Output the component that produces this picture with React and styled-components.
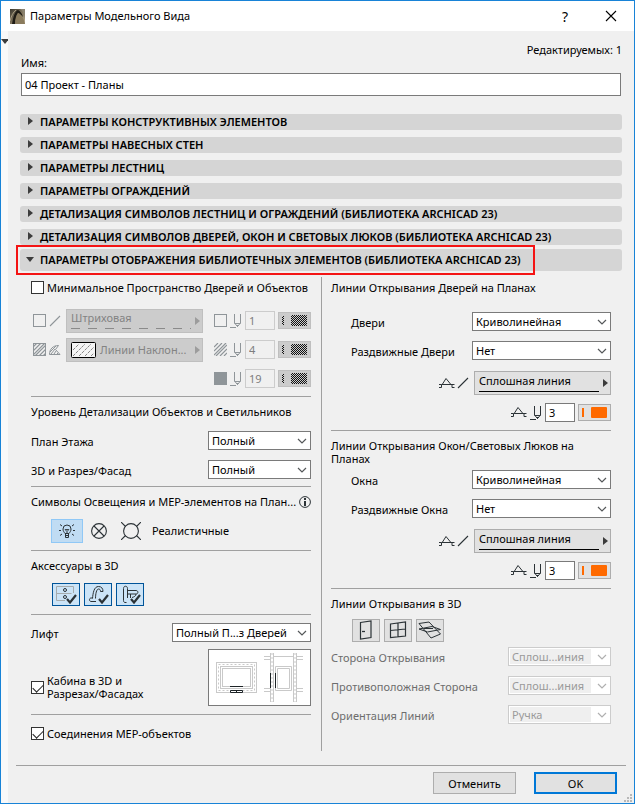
import React, { useState } from "react";
import styled, { createGlobalStyle } from "styled-components";

const GlobalStyle = createGlobalStyle`
  * {
    box-sizing: border-box;
  }

  body {
    margin: 0;
    background: #f0f0f0;
    color: #000000;
    font: 11px/13px "Noto Sans", "Open Sans", sans-serif;
  }

  button, input, select {
    margin: 0;
    color: inherit;
    font: inherit;
  }

  svg {
    display: block;
    flex: none;
  }
`;

const panels = [
  "ПАРАМЕТРЫ КОНСТРУКТИВНЫХ ЭЛЕМЕНТОВ",
  "ПАРАМЕТРЫ НАВЕСНЫХ СТЕН",
  "ПАРАМЕТРЫ ЛЕСТНИЦ",
  "ПАРАМЕТРЫ ОГРАЖДЕНИЙ",
  "ДЕТАЛИЗАЦИЯ СИМВОЛОВ ЛЕСТНИЦ И ОГРАЖДЕНИЙ (БИБЛИОТЕКА ARCHICAD 23)",
  "ДЕТАЛИЗАЦИЯ СИМВОЛОВ ДВЕРЕЙ, ОКОН И СВЕТОВЫХ ЛЮКОВ (БИБЛИОТЕКА ARCHICAD 23)",
];

/* ---------- icons ---------- */

const AppLogo = () => (
  <svg width="15" height="15" viewBox="0 0 15 15" aria-hidden="true">
    <defs>
      <linearGradient id="logoBg" x1="0" y1="0" x2="1" y2="1">
        <stop offset="0" stopColor="#3a372d" />
        <stop offset="0.5" stopColor="#7d725c" />
        <stop offset="1" stopColor="#c0b294" />
      </linearGradient>
    </defs>
    <rect width="15" height="15" fill="url(#logoBg)" />
    <path d="M10 0c3 2 5 6 5 11V0z" fill="#8b8371" />
    <path d="M2 15C3 8 5 2 8 1c2 1 4 3 5 7-2-2-4-4-5-4-2 2-2 6-3 11z" fill="#1f1c15" />
    <path d="M0 12C1 8 3 3 6 1" stroke="#a99d82" fill="none" />
    <path d="M5 15c0-5 1-8 3-11 3 1 6 6 7 11z" fill="#8a7b5d" />
  </svg>
);

const CloseIcon = () => (
  <svg width="12" height="12" viewBox="0 0 12 12" aria-hidden="true">
    <path d="M1 1l10 10M11 1L1 11" stroke="#000" strokeWidth="1.1" />
  </svg>
);

const SquareIcon = () => (
  <svg width="13" height="13" viewBox="0 0 13 13" aria-hidden="true">
    <rect x="0.5" y="0.5" width="12" height="12" fill="none" stroke="#8f9599" />
  </svg>
);

const HatchIcon = ({ framed }) => (
  <svg width="13" height="13" viewBox="0 0 13 13" aria-hidden="true">
    <path
      d="M0 4l4-4M0 8l8-8M0 12L12 0M2 13L13 2M6 13l7-7M10 13l3-3"
      stroke="#8f9599"
      strokeWidth="1.2"
    />
    {framed && <rect x="0.5" y="0.5" width="12" height="12" fill="none" stroke="#8f9599" />}
  </svg>
);

const SolidIcon = () => (
  <svg width="13" height="13" viewBox="0 0 13 13" aria-hidden="true">
    <rect width="13" height="13" fill="#8f9599" />
  </svg>
);

const FanIcon = () => (
  <svg width="12" height="12" viewBox="0 0 12 12" aria-hidden="true">
    <g stroke="#8f9599" fill="none">
      <path d="M0.500 10.500C0.500 5 4 1.500 9.500 1.500L6.500 5.500 11 10.500z" />
      <path d="M1 8l6-6M2 10l4-5M5 10l2-3M8 10l1-1" />
    </g>
  </svg>
);

const LineIcon = ({ color = "#2b3236" }) => (
  <svg width="12" height="12" viewBox="0 0 12 12" aria-hidden="true">
    <path d="M1 11L11 1" stroke={color} strokeWidth="1.1" />
  </svg>
);

const PenIcon = ({ color = "#2b3236" }) => (
  <svg width="12" height="14" viewBox="0 0 12 14" aria-hidden="true">
    <g stroke={color} fill="none">
      <path d="M4.500 0v9l3 3.500 3-3.500V0M4.500 9.500h6M0 13.500h6" />
      <path d="M6.500 11.500h2l-1 1z" fill={color} />
    </g>
  </svg>
);

const OpeningIcon = () => (
  <svg width="16" height="13" viewBox="0 0 16 13" aria-hidden="true">
    <g stroke="#2b3236" fill="none">
      <path d="M0 7.500h2.500v3H0M15.500 7.500H13v3h2.500" />
      <path d="M2.500 7.500h10.500M3.500 7L7 1.500 11.500 7" />
    </g>
  </svg>
);

const Chevron = ({ color = "#55585a" }) => (
  <svg width="10" height="6" viewBox="0 0 10 6" aria-hidden="true">
    <path d="M1 1l4 4 4-4" fill="none" stroke={color} strokeWidth="1.2" />
  </svg>
);

const Triangle = ({ down, color = "#3c3c3c" }) =>
  down ? (
    <svg width="8" height="5" viewBox="0 0 8 5" aria-hidden="true">
      <path d="M0 0h8L4 5z" fill={color} />
    </svg>
  ) : (
    <svg width="5" height="8" viewBox="0 0 5 8" aria-hidden="true">
      <path d="M0 0v8l5-4z" fill={color} />
    </svg>
  );

const InfoIcon = () => (
  <svg width="12" height="12" viewBox="0 0 12 12" aria-hidden="true">
    <circle cx="6" cy="6" r="5.400" fill="none" stroke="#2b3236" />
    <path d="M5 2h2v2H5zM5 5h2v5H5z" fill="#2b3236" />
  </svg>
);

const BulbIcon = () => (
  <svg width="16" height="16" viewBox="0 0 16 16" aria-hidden="true">
    <g stroke="#2b3236" fill="none">
      <path d="M6 10.500C5 9 4 8 4 6a4 4 0 018 0c0 2-1 3-2 4.500z" />
      <path d="M6 6l1 1.500L8 6l1 1.500L10 6M8 8v2.500M6.500 12.500h3M6.500 14.500h3M6.500 10.500v4M9.500 10.500v4" />
      <path d="M0 7.500h2M14 7.500h2M1 1.500l2 1.500M15 1.500L13 3M1 12.500l2-1.500M15 12.500L13 11" />
    </g>
  </svg>
);

const CrossLampIcon = () => (
  <svg width="16" height="16" viewBox="0 0 16 16" aria-hidden="true">
    <circle cx="8" cy="8" r="7.400" fill="none" stroke="#2b3236" strokeWidth="1.100" />
    <path d="M3 3l10 10M13 3L3 13" stroke="#2b3236" strokeWidth="1.100" />
  </svg>
);

const RayLampIcon = () => (
  <svg width="20" height="18" viewBox="0 0 20 18" aria-hidden="true">
    <circle cx="10" cy="9" r="7.400" fill="none" stroke="#2b3236" strokeWidth="1.100" />
    <path d="M0 0l4.500 4.500M20 0l-4.500 4.500M0 18l4.500-4.500M20 18l-4.500-4.500" stroke="#2b3236" strokeWidth="1.100" />
  </svg>
);

const Tick = () => <path d="M12 14l3 3.500 6-7.500" fill="none" stroke="#2b3236" strokeWidth="2.200" />;

const DrawerIcon = () => (
  <svg width="22" height="19" viewBox="0 0 22 19" aria-hidden="true">
    <path d="M18.500 8V1.500h-17v14H10M1.500 8.500h15" fill="none" stroke="#a5abae" />
    <circle cx="10" cy="5" r="1.500" fill="none" stroke="#2b3236" />
    <circle cx="10" cy="12" r="1.500" fill="none" stroke="#2b3236" />
    <Tick />
  </svg>
);

const TapIcon = () => (
  <svg width="22" height="19" viewBox="0 0 22 19" aria-hidden="true">
    <g fill="none" stroke="#2b3236">
      <path d="M5.500 13.500C6 8 7 1.500 11.500 1.500c3 0 4.500 2 4.500 5h-2.500c0-2-1-2.500-2-2.500-2 0-3 5-3 9.500" />
      <path d="M9 16.500H4c-2 0-2-3.500 0-3.500h1.500" />
    </g>
    <Tick />
  </svg>
);

const ToiletIcon = () => (
  <svg width="22" height="19" viewBox="0 0 22 19" aria-hidden="true">
    <g fill="none" stroke="#2b3236">
      <path d="M7.500 17.500H6c-1 0-1.500-1-1.500-2V3.500c0-3 4-3 4 0V13" />
      <path d="M8.500 5.500H17c2.500 0 2.500 3.500 0 3.500H8.500M17 9c0 2-2 3-4 3.500M11.500 9v4" />
    </g>
    <Tick />
  </svg>
);

const DoorIcon = () => (
  <svg width="14" height="20" viewBox="0 0 14 20" aria-hidden="true">
    <path d="M1.500 2.500l10.500-1.500v16.500l-10.500 1.500z" fill="none" stroke="#2b3236" strokeWidth="1.200" />
    <path d="M3 11.500h3" stroke="#2b3236" strokeWidth="1.300" />
  </svg>
);

const WindowIcon = () => (
  <svg width="18" height="18" viewBox="0 0 18 18" aria-hidden="true">
    <path
      d="M1.500 3l15-2v14l-15 1.500zM9 2v13.500M1.500 9.500L16.500 8"
      fill="none"
      stroke="#2b3236"
      strokeWidth="1.200"
    />
  </svg>
);

const SkylightIcon = () => (
  <svg width="24" height="18" viewBox="0 0 24 18" aria-hidden="true">
    <path
      d="M1 2.500L11 1l11.500 12L13 17zM1 8l13-2.500 8.500 3-13 2.500zM6 7.500h9"
      fill="none"
      stroke="#2b3236"
    />
  </svg>
);

const Swatch = ({ disabled }) => (
  <svg width="25" height="11" viewBox="0 0 25 11" aria-hidden="true">
    <defs>
      <pattern id="dither" width="2" height="2" patternUnits="userSpaceOnUse">
        <rect width="1" height="1" fill="#111" />
        <rect x="1" y="1" width="1" height="1" fill="#111" />
      </pattern>
    </defs>
    <rect x="0" y="1" width="2" height="9" fill={disabled ? "url(#dither)" : "#ff6a00"} />
    <rect x="9" y="0" width="16" height="11" rx="1" fill={disabled ? "url(#dither)" : "#ff6a00"} />
  </svg>
);

const FillSample = () => (
  <svg width="25" height="16" viewBox="0 0 25 16" aria-hidden="true">
    <rect x="0.500" y="0.500" width="24" height="15" rx="1" fill="#f4f4f4" stroke="#000" />
    <path
      d="M2 8l6-6M2 14L14 2M8 14L20 2M14 14l9-9M20 14l3-3"
      stroke="#555"
      strokeWidth="0.700"
      strokeDasharray="3 1"
    />
  </svg>
);

const LiftPreview = () => (
  <svg width="101" height="55" viewBox="0 0 101 55" aria-hidden="true">
    <g fill="none" stroke="#c9c9c9">
      <rect x="7.500" y="12.500" width="40" height="30" />
      <rect x="11.500" y="16.500" width="32" height="22" />
      <path d="M9.500 14.500h36v26h-36z" strokeDasharray="2 2" />
      <rect x="13.500" y="18.500" width="28" height="18" />
      <path d="M61.500 3v49M64.500 3v49M84.500 3v49M87.500 3v49" />
      <path d="M63 3v49M86 3v49" strokeDasharray="2 2" />
      <path d="M55 6.500h7M55 9.500h7M65 6.500h19M88 6.500h6M88 9.500h6M55 38.500h7M55 41.500h7M88 38.500h6M88 41.500h6" />
      <path d="M66.500 16.500h16v24h-16z" />
      <path d="M68.500 18.500h12v20h-12z" />
    </g>
    <path d="M21 36.500h13M21.500 40.500h12v2h-12zM27.500 40v3" fill="none" stroke="#1d2326" />
    <path d="M61.500 23v15M66.500 23v15" stroke="#1d2326" />
  </svg>
);

const GripIcon = () => (
  <svg width="8" height="8" viewBox="0 0 8 8" aria-hidden="true">
    <path d="M6 0h2v2H6zM3 3h2v2H3zM6 3h2v2H6zM0 6h2v2H0zM3 6h2v2H3zM6 6h2v2H6z" fill="#b8b8b8" />
  </svg>
);

/* ---------- controls ---------- */

const Combo = ({ value, width, ...rest }) => (
  <ComboBox $width={width}>
    <Select defaultValue={value} {...rest}>
      <option>{value}</option>
    </Select>
    <Chevron color={rest.disabled ? "#b0b0b0" : undefined} />
  </ComboBox>
);

const ComboRow = ({ id, label, value, width = 103, indent, disabled }) => (
  <Row $indent={indent}>
    <Label htmlFor={id} $disabled={disabled}>
      {label}
    </Label>
    <Combo id={id} value={value} width={width} disabled={disabled} />
  </Row>
);

const PenControls = ({ label, value, disabled }) => (
  <>
    <PenInput aria-label={label} defaultValue={value} disabled={disabled} />
    <ColorButton type="button" aria-label={`${label}: цвет`} disabled={disabled}>
      <Swatch disabled={disabled} />
    </ColorButton>
  </>
);

const OpeningLines = ({ name }) => (
  <>
    <LineRow>
      <OpeningIcon />
      <LineIcon />
      <LineButton type="button">
        <LineName>Сплошная линия</LineName>
        <Triangle />
      </LineButton>
    </LineRow>
    <PenRow>
      <OpeningIcon />
      <PenIcon />
      <PenControls label={`Перо: ${name}`} value="3" />
    </PenRow>
  </>
);

const App = () => {
  const [lamp, setLamp] = useState(0);

  return (
    <Dialog>
      <GlobalStyle />
      <TitleBar>
        <AppLogo />
        <DialogTitle>Параметры Модельного Вида</DialogTitle>
        <TitleButton type="button" aria-label="Справка">
          ?
        </TitleButton>
        <TitleButton type="button" aria-label="Закрыть">
          <CloseIcon />
        </TitleButton>
      </TitleBar>

      <Body>
        <Rail>
          <Triangle down />
        </Rail>
        <Main>
          <Editable>Редактируемых: 1</Editable>
          <NameLabel htmlFor="name">Имя:</NameLabel>
          <NameInput id="name" defaultValue="04 Проект - Планы" />

          <Panels>
            {panels.map((title) => (
              <PanelButton type="button" key={title} aria-expanded="false">
                <Marker>
                  <Triangle />
                </Marker>
                {title}
              </PanelButton>
            ))}
          </Panels>
          <OpenPanel type="button" aria-expanded="true">
            <Marker>
              <Triangle down />
            </Marker>
            <Highlighted>
              ПАРАМЕТРЫ ОТОБРАЖЕНИЯ БИБЛИОТЕЧНЫХ ЭЛЕМЕНТОВ (БИБЛИОТЕКА ARCHICAD 23)
            </Highlighted>
          </OpenPanel>

          <Columns>
            <Column>
              <Section $bottom={3}>
                <FirstLine $gap={9}>
                  <CheckLabel>
                    <Check type="checkbox" />
                    Минимальное Пространство Дверей и Объектов
                  </CheckLabel>
                </FirstLine>
                <SpaceGrid>
                  <IconPair>
                    <SquareIcon />
                    <LineIcon color="#8f9599" />
                  </IconPair>
                  <LineButton type="button" disabled>
                    <LineName $dashed>Штриховая</LineName>
                    <Triangle color="#9c9c9c" />
                  </LineButton>
                  <PenGroup>
                    <SquareIcon />
                    <PenIcon color="#8f9599" />
                    <PenControls label="Перо контура" value="1" disabled />
                  </PenGroup>
                  <IconPair>
                    <HatchIcon framed />
                    <FanIcon />
                  </IconPair>
                  <LineButton type="button" disabled>
                    <FillSample />
                    <FillName>Линии Наклон...</FillName>
                    <Triangle color="#9c9c9c" />
                  </LineButton>
                  <PenGroup>
                    <HatchIcon />
                    <PenIcon color="#8f9599" />
                    <PenControls label="Перо штриховки" value="4" disabled />
                  </PenGroup>
                  <PenGroup>
                    <SolidIcon />
                    <PenIcon color="#8f9599" />
                    <PenControls label="Перо фона" value="19" disabled />
                  </PenGroup>
                </SpaceGrid>
              </Section>

              <Section $bottom={2}>
                <Heading>Уровень Детализации Объектов и Светильников</Heading>
                <ComboRow id="plan" label="План Этажа" value="Полный" />
                <ComboRow id="section" label="3D и Разрез/Фасад" value="Полный" />
              </Section>

              <Section $bottom={5}>
                <Heading>
                  Символы Освещения и МЕР-элементов на План...
                  <InfoIcon />
                </Heading>
                <LampRow>
                  {[BulbIcon, CrossLampIcon, RayLampIcon].map((Icon, i) => (
                    <LampButton
                      type="button"
                      key={i}
                      aria-label={`Символ ${i + 1}`}
                      $active={lamp === i}
                      onClick={() => setLamp(i)}
                    >
                      <Icon />
                    </LampButton>
                  ))}
                  <LampName>Реалистичные</LampName>
                </LampRow>
              </Section>

              <Section $bottom={5}>
                <Heading>Аксессуары в 3D</Heading>
                <ToolRow>
                  <ToolButton type="button" $active aria-label="Мебель">
                    <DrawerIcon />
                  </ToolButton>
                  <ToolButton type="button" $active aria-label="Смесители">
                    <TapIcon />
                  </ToolButton>
                  <ToolButton type="button" $active aria-label="Сантехника">
                    <ToiletIcon />
                  </ToolButton>
                </ToolRow>
              </Section>

              <Section $top={3} $bottom={8}>
                <ComboRow id="lift" label="Лифт" value="Полный П...з Дверей" width={139} />
                <LiftRow>
                  <CheckLabel>
                    <Check type="checkbox" defaultChecked />
                    Кабина в 3D и Разрезах/Фасадах
                  </CheckLabel>
                  <Preview>
                    <LiftPreview />
                  </Preview>
                </LiftRow>
              </Section>

              <LastLine>
                <CheckLabel>
                  <Check type="checkbox" defaultChecked />
                  Соединения МЕР-объектов
                </CheckLabel>
              </LastLine>
            </Column>

            <Column $divided>
              <Section $bottom={8}>
                <FirstLine $gap={10}>Линии Открывания Дверей на Планах</FirstLine>
                <ComboRow id="doors" label="Двери" value="Криволинейная" width={139} indent />
                <ComboRow id="slidingDoors" label="Раздвижные Двери" value="Нет" width={139} indent />
                <OpeningLines name="двери" />
              </Section>

              <Section $top={8} $bottom={8}>
                <div>Линии Открывания Окон/Световых Люков на Планах</div>
                <ComboRow id="windows" label="Окна" value="Криволинейная" width={139} indent />
                <ComboRow id="slidingWindows" label="Раздвижные Окна" value="Нет" width={139} indent />
                <OpeningLines name="окна" />
              </Section>

              <Heading>Линии Открывания в 3D</Heading>
              <ToolRow $short>
                <ToolButton type="button" aria-label="Двери в 3D">
                  <DoorIcon />
                </ToolButton>
                <ToolButton type="button" aria-label="Окна в 3D">
                  <WindowIcon />
                </ToolButton>
                <ToolButton type="button" aria-label="Световые люки в 3D">
                  <SkylightIcon />
                </ToolButton>
              </ToolRow>
              <ComboRow id="side" label="Сторона Открывания" value="Сплош...иния" disabled />
              <ComboRow id="opposite" label="Противоположная Сторона" value="Сплош...иния" disabled />
              <ComboRow id="direction" label="Ориентация Линий" value="Ручка" disabled />
            </Column>
          </Columns>

          <Footer>
            <DialogButton type="button">Отменить</DialogButton>
            <DialogButton type="button" $primary>
              OK
            </DialogButton>
            <Grip>
              <GripIcon />
            </Grip>
          </Footer>
        </Main>
      </Body>
    </Dialog>
  );
};

export default App;

const Dialog = styled.div`
  display: flex;
  flex-direction: column;
  min-height: 100vh;
  border: 1px solid #1883d7;
`;

const TitleBar = styled.header`
  display: flex;
  align-items: center;
  height: 30px;
  padding-left: 9px;
  background: #ffffff;
`;

const DialogTitle = styled.h1`
  flex: 1;
  margin: 0 0 0 5px;
  font-size: 11px;
  font-weight: 400;
  line-height: 16px;
`;

const TitleButton = styled.button`
  display: grid;
  place-items: center;
  width: 46px;
  height: 28px;
  padding: 0;
  border: 0;
  background: transparent;
  font-size: 14px;
`;

const Body = styled.div`
  display: flex;
  flex: 1;
`;

const Rail = styled.div`
  width: 7px;
  padding-top: 8px;
  background: #f9f9f9;
  overflow: hidden;
`;

const Main = styled.main`
  display: flex;
  flex: 1;
  flex-direction: column;
  min-width: 0;
  padding: 13px 12px 0;
`;

const Editable = styled.div`
  line-height: 12px;
  text-align: right;
`;

const NameLabel = styled.label`
  padding: 0 1px;
`;

const NameInput = styled.input`
  height: 23px;
  margin: 4px 1px 18px;
  padding: 0 3px;
  border: 1px solid #7a7a7a;
  background: #ffffff;
`;

const Panels = styled.div`
  display: flex;
  flex-direction: column;
  gap: 7px;
`;

const PanelButton = styled.button`
  display: flex;
  align-items: center;
  height: 16px;
  padding: 0 0 2px;
  border: 0;
  border-radius: 3px;
  background: #d5d5d5;
  font-weight: 600;
  white-space: nowrap;
`;

const OpenPanel = styled(PanelButton)`
  height: 22px;
  margin-top: 4px;
`;

const Marker = styled.span`
  display: grid;
  place-items: center;
  width: 20px;
`;

const Highlighted = styled.span`
  position: relative;

  &::after {
    content: "";
    position: absolute;
    inset: -8px -14px -9px -24px;
    border: 2px solid #f41414;
  }
`;

const Columns = styled.div`
  display: grid;
  grid-template-columns: 1fr 1fr;
  padding: 6px 11px 0 11px;
`;

const Column = styled.div`
  min-width: 0;
  padding-right: ${({ $divided }) => ($divided ? 0 : 10)}px;
  padding-left: ${({ $divided }) => ($divided ? 9 : 0)}px;
  border-left: ${({ $divided }) => ($divided ? "1px solid #a0a0a0" : "0")};
`;

const Section = styled.section`
  padding-top: ${({ $top = 0 }) => $top}px;
  padding-bottom: ${({ $bottom }) => $bottom}px;
  border-bottom: 1px solid #a0a0a0;
`;

const FirstLine = styled.div`
  display: flex;
  align-items: center;
  height: 20px;
  margin-bottom: ${({ $gap }) => $gap}px;
`;

const LastLine = styled.div`
  display: flex;
  align-items: center;
  height: 36px;
`;

const Heading = styled.div`
  display: flex;
  align-items: center;
  justify-content: space-between;
  height: 29px;
  white-space: nowrap;
`;

const Row = styled.div`
  display: flex;
  align-items: center;
  justify-content: space-between;
  height: 29px;
  padding-left: ${({ $indent }) => ($indent ? 20 : 0)}px;
`;

const Label = styled.label`
  padding-top: 1px;
  color: ${({ $disabled }) => ($disabled ? "#6d6d6d" : "inherit")};
  white-space: nowrap;
`;

const CheckLabel = styled.label`
  display: flex;
  align-items: center;
  gap: 3px;
`;

const Check = styled.input`
  appearance: none;
  flex: none;
  width: 13px;
  height: 13px;
  border: 1px solid #333333;
  background: #ffffff;

  &:checked::before {
    content: "";
    display: block;
    width: 9px;
    height: 5px;
    margin: 2px 1px;
    border: solid #222222;
    border-width: 0 0 1px 1px;
    transform: rotate(-45deg);
  }
`;

const ComboBox = styled.div`
  display: grid;
  align-items: center;
  width: ${({ $width }) => $width}px;

  > * {
    grid-area: 1 / 1;
  }

  > svg {
    justify-self: end;
    margin-right: 4px;
    pointer-events: none;
  }
`;

const Select = styled.select`
  appearance: none;
  width: 100%;
  height: 19px;
  padding: 0 16px 0 3px;
  border: 1px solid #7a7a7a;
  border-radius: 0;
  background: #ffffff;

  &:disabled {
    border-color: #cccccc;
    background: linear-gradient(#efefef, #efefef) 1px 1px / calc(100% - 20px) 15px no-repeat #ffffff;
    color: #9a9a9a;
    opacity: 1;
  }
`;

const SpaceGrid = styled.div`
  display: grid;
  grid-template-columns: 33px 137px 1fr;
  grid-auto-rows: 29px;
  align-items: center;
  padding-left: 2px;
`;

const IconPair = styled.div`
  display: flex;
  align-items: center;
  gap: 3px;
`;

const PenGroup = styled.div`
  display: flex;
  align-items: center;
  justify-content: flex-end;
  gap: 3px;
  grid-column: 3;
`;

const PenInput = styled.input`
  width: 30px;
  height: 19px;
  padding: 0 3px;
  border: 1px solid #7a7a7a;
  background: #ffffff;

  &:disabled {
    border-color: #cccccc;
    background: #f0f0f0;
    color: #7d7d7d;
  }
`;

const ColorButton = styled.button`
  display: grid;
  place-items: center;
  width: 33px;
  height: 17px;
  padding: 0;
  border: 1px solid #adadad;
  background: #e1e1e1;

  &:disabled {
    border-color: #bfbfbf;
    background: #cccccc;
  }
`;

const LineButton = styled.button`
  display: flex;
  align-items: center;
  gap: 4px;
  width: 137px;
  height: 24px;
  padding: 0 2px 0 4px;
  border: 1px solid #adadad;
  background: #e1e1e1;
  text-align: left;

  &:disabled {
    border-color: #bfbfbf;
    background: #cccccc;
    color: #838383;
  }
`;

const LineName = styled.span`
  flex: 1;
  height: 17px;
  line-height: 12px;
  background: ${({ $dashed }) =>
      $dashed
        ? "repeating-linear-gradient(90deg, #8a8a8a 0 9px, transparent 9px 17px)"
        : "linear-gradient(#000000, #000000)"}
    bottom / 100% 1px no-repeat;
`;

const FillName = styled.span`
  flex: 1;
  white-space: nowrap;
`;

const LineRow = styled.div`
  display: flex;
  align-items: center;
  justify-content: flex-end;
  gap: 2px;
  margin-top: 6px;

  ${LineButton} {
    margin-left: 3px;
  }
`;

const PenRow = styled.div`
  display: flex;
  align-items: center;
  justify-content: flex-end;
  gap: 3px;
  margin-top: 8px;
`;

const LampRow = styled.div`
  display: flex;
  align-items: center;
  height: 29px;
  padding-left: 20px;
`;

const LampButton = styled.button`
  display: grid;
  place-items: center;
  width: 32px;
  height: 24px;
  padding: 0;
  border: 1px solid ${({ $active }) => ($active ? "#90c8f6" : "transparent")};
  background: ${({ $active }) => ($active ? "#c0dcf3" : "transparent")};
`;

const LampName = styled.span`
  margin-left: 5px;
`;

const ToolRow = styled.div`
  display: flex;
  align-items: center;
  gap: 4px;
  height: ${({ $short }) => ($short ? 24 : 29)}px;
  padding-left: 21px;
`;

const ToolButton = styled.button`
  display: grid;
  place-items: center;
  width: 28px;
  height: 23px;
  padding: 0;
  border: 1px solid ${({ $active }) => ($active ? "#005499" : "#adadad")};
  background: ${({ $active }) => ($active ? "#cce4f7" : "#e1e1e1")};
`;

const LiftRow = styled.div`
  display: flex;
  align-items: center;
  justify-content: space-between;
  gap: 60px;
  margin-top: 2px;

  ${CheckLabel} {
    padding-top: 19px;
  }
`;

const Preview = styled.div`
  display: grid;
  flex: none;
  place-items: center;
  width: 103px;
  height: 57px;
  border: 1px solid #7a7a7a;
  background: #ffffff;
`;

const Footer = styled.footer`
  display: flex;
  align-items: flex-start;
  justify-content: flex-end;
  gap: 18px;
  position: relative;
  margin: auto -4px 0;
  padding: 6px 9px 9px;
  border-top: 1px solid #a0a0a0;
`;

const DialogButton = styled.button`
  width: 83px;
  height: 22px;
  padding: 0;
  border: ${({ $primary }) => ($primary ? "2px solid #0078d7" : "1px solid #adadad")};
  background: #e1e1e1;
`;

const Grip = styled.div`
  display: flex;
  position: absolute;
  right: -6px;
  bottom: 1px;
`;
